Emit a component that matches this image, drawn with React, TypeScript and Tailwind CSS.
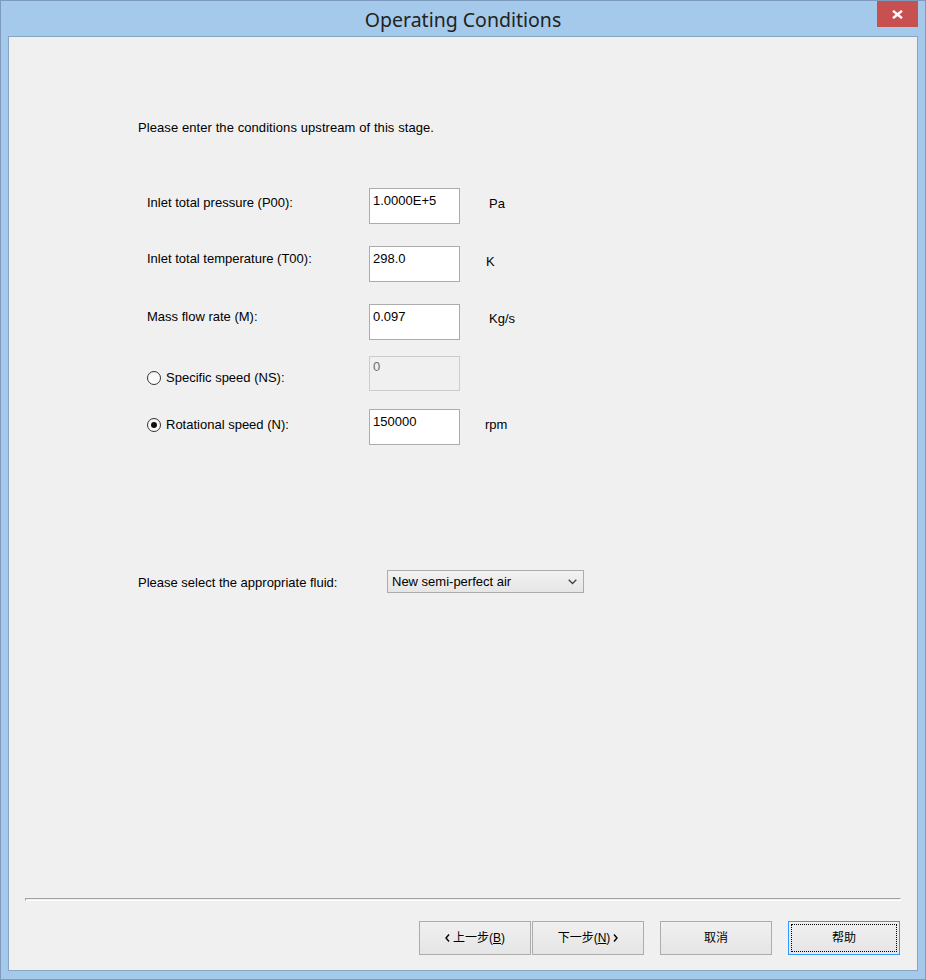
import React from "react";

// Win8-style wizard page: operating conditions for a stage.
const ui = "font-['Liberation_Sans',Arial,sans-serif] text-[13px] leading-[16px] text-black";
const cjk = "font-['Liberation_Sans','Noto_Sans_CJK_SC',sans-serif] text-[12px] leading-[16px] text-black";

function Field({ value, disabled }: { value: string; disabled?: boolean }) {
  return (
    <div
      className={
        disabled
          ? "h-[35px] w-[91px] shrink-0 border border-[#cccccc] bg-[#f0f0f0] pl-[3px] pt-[2px] text-[#6d6d6d]"
          : "h-[36px] w-[91px] shrink-0 border border-[#acacac] bg-white pl-[3px] pt-[4px]"
      }
    >
      {value}
    </div>
  );
}

function Radio({ checked }: { checked?: boolean }) {
  return (
    <span className="flex h-[14px] w-[14px] items-center justify-center rounded-full border border-[#333333] bg-gradient-to-b from-[#f4f4f4] to-white">
      {checked && <span className="h-[6px] w-[6px] rounded-full bg-[#111]" />}
    </span>
  );
}

type Row = {
  label: string;
  value: string;
  unit?: string;
  labelTop: string;
  unitTop?: string;
  gap: string;
  radio?: "on" | "off";
  disabled?: boolean;
};

const rows: Row[] = [
  { label: "Inlet total pressure (P00):", value: "1.0000E+5", unit: "Pa", labelTop: "pt-[7px]", unitTop: "pt-[8px] pl-[29px]", gap: "mt-[52px]" },
  { label: "Inlet total temperature (T00):", value: "298.0", unit: "K", labelTop: "pt-[5px]", unitTop: "pt-[8px] pl-[26px]", gap: "mt-[22px]" },
  { label: "Mass flow rate (M):", value: "0.097", unit: "Kg/s", labelTop: "pt-[5px]", unitTop: "pt-[7px] pl-[29px]", gap: "mt-[22px]" },
  { label: "Specific speed (NS):", value: "0", labelTop: "pt-[14px]", gap: "mt-[16px]", radio: "off", disabled: true },
  { label: "Rotational speed (N):", value: "150000", unit: "rpm", labelTop: "pt-[8px]", unitTop: "pt-[8px] pl-[25px]", gap: "mt-[18px]", radio: "on" },
];

function Chev({ dir }: { dir: "l" | "r" }) {
  return (
    <svg width="5" height="8" viewBox="0 0 5 8" className="shrink-0">
      <polyline
        points={dir === "l" ? "4,0.5 1,4 4,7.5" : "1,0.5 4,4 1,7.5"}
        fill="none"
        stroke="#000"
        strokeWidth="1.4"
      />
    </svg>
  );
}

function Btn({ children, focus, className = "" }: { children: React.ReactNode; focus?: boolean; className?: string }) {
  return (
    <div
      className={
        "flex h-[34px] w-[112px] items-center justify-center bg-gradient-to-b from-[#f0f0f0] to-[#e5e5e5] " +
        (focus ? "border border-[#3399ff] " : "border border-[#acacac] ") +
        className
      }
    >
      {focus ? (
        <div className="flex h-[28px] w-[106px] items-center justify-center border border-dotted border-black">
          {children}
        </div>
      ) : (
        children
      )}
    </div>
  );
}

export default function App() {
  return (
    <div className="flex h-[980px] w-[926px] flex-col border border-[#7c9bbd] bg-[#a5c9ea]">
      <div className="relative flex h-[35px] shrink-0 items-center justify-center pt-[2px]">
        <span className="font-['Noto_Sans','Open_Sans',sans-serif] text-[19.5px] text-[#222]">Operating Conditions</span>
        <div className="absolute right-[7px] top-0 flex h-[26px] w-[41px] items-center justify-center bg-[#c75050]">
          <svg width="11" height="9" viewBox="0 0 11 9">
            <path d="M1 0.8 L10 8.2 M10 0.8 L1 8.2" stroke="#fff" strokeWidth="2.4" />
          </svg>
        </div>
      </div>

      <div className={"mx-[7px] flex h-[935px] shrink-0 flex-col border border-[#86a5c4] bg-[#f0f0f0] " + ui}>
        <div className="pl-[129px] pt-[83px]">
          <div className="tracking-[0.08px]">Please enter the conditions upstream of this stage.</div>

          <div className="pl-[9px]">
            {rows.map((r) => (
              <div key={r.label} className={"flex " + r.gap}>
                <div className={"w-[222px] shrink-0 " + r.labelTop}>
                  {r.radio ? (
                    <div className="flex items-center gap-[5px]">
                      <Radio checked={r.radio === "on"} />
                      <span>{r.label}</span>
                    </div>
                  ) : (
                    r.label
                  )}
                </div>
                <Field value={r.value} disabled={r.disabled} />
                {r.unit && <div className={r.unitTop}>{r.unit}</div>}
              </div>
            ))}
          </div>

          <div className="mt-[125px] flex">
            <div className="w-[249px] shrink-0 pt-[5px]">Please select the appropriate fluid:</div>
            <div className="flex h-[23px] w-[197px] items-center justify-between border border-[#acacac] bg-gradient-to-b from-[#f2f2f2] to-[#e6e6e6] pl-[4px] pr-[6px]">
              <span>New semi-perfect air</span>
              <svg width="9" height="6" viewBox="0 0 9 6">
                <polyline points="0.7,0.7 4.5,4.5 8.3,0.7" fill="none" stroke="#444" strokeWidth="1.4" />
              </svg>
            </div>
          </div>
        </div>

        <div className="ml-[16px] mt-[305px] h-[3px] w-[876px] border-b border-l border-t border-b-white border-l-[#a0a0a0] border-t-[#a0a0a0] border-r border-r-white" />

        <div className={"ml-[410px] mt-[20px] flex " + cjk}>
          <Btn>
            <span className="flex items-center gap-[3px]">
              <Chev dir="l" />
              <span>
                上一步(<span className="underline">B</span>)
              </span>
            </span>
          </Btn>
          <Btn className="ml-[1px]">
            <span className="flex items-center gap-[3px]">
              <span>
                下一步(<span className="underline">N</span>)
              </span>
              <Chev dir="r" />
            </span>
          </Btn>
          <Btn className="ml-[16px]">取消</Btn>
          <Btn focus className="ml-[16px]">
            帮助
          </Btn>
        </div>
      </div>
    </div>
  );
}
